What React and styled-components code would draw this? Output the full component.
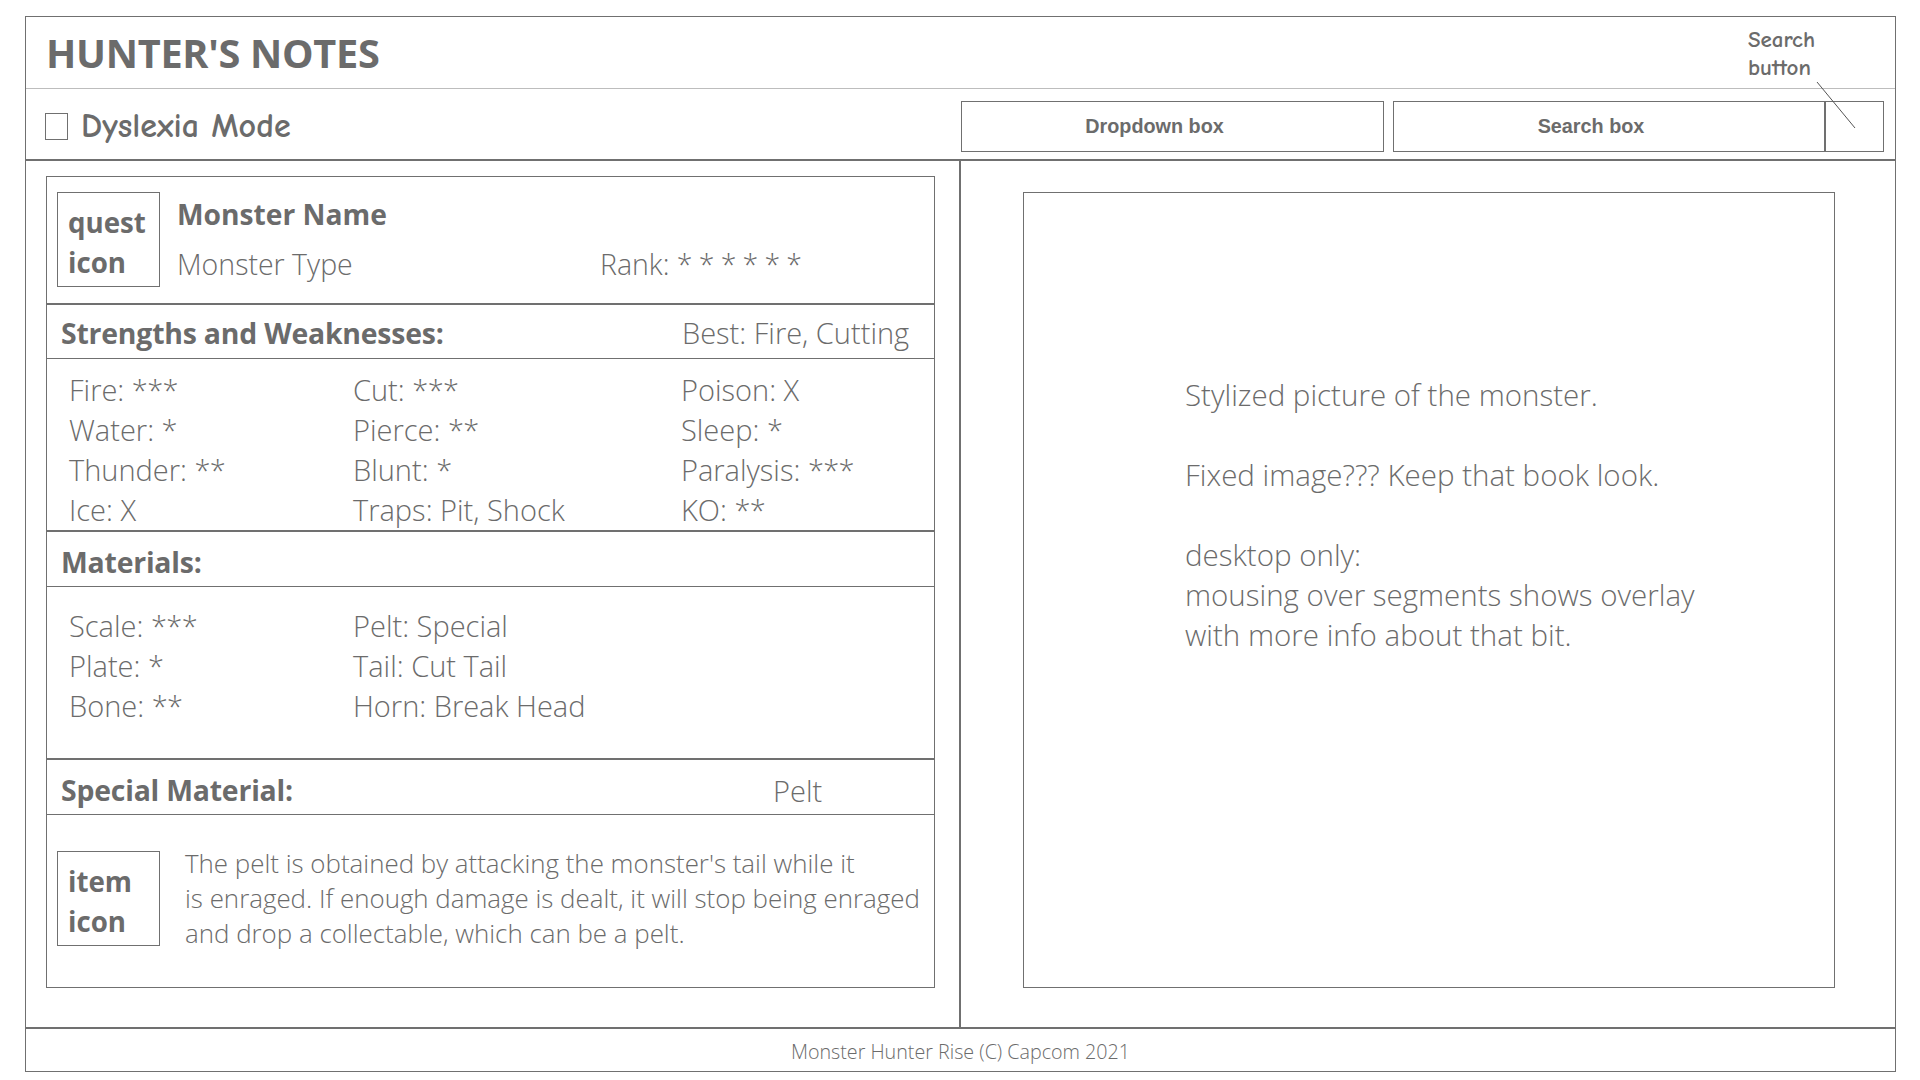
import React from "react";
import styled, { createGlobalStyle } from "styled-components";

const GlobalStyle = createGlobalStyle`
  html, body { margin: 0; padding: 0; background: #ffffff; }
  body { font-family: "Open Sans", "Noto Sans", sans-serif; color: #6b6b6b; }
  * { box-sizing: border-box; }
`;

const LINE = "#707070";
const TEXT = "#6b6b6b";

const Page = styled.div`
  width: 1920px;
  height: 1080px;
  padding: 16px 0 0 25px;
`;

const Frame = styled.div`
  position: relative;
  width: 1871px;
  height: 1056px;
  border: 1px solid ${LINE};
  display: flex;
  flex-direction: column;
`;

const Header = styled.header`
  height: 72px;
  border-bottom: 1px solid #bdbdbd;
  display: flex;
  align-items: center;
  padding-left: 20px;
`;

const Title = styled.h1`
  margin: 0;
  font-family: "Open Sans", "Noto Sans", sans-serif;
  font-weight: 700;
  font-size: 39.7px;
  letter-spacing: -0.3px;
  color: ${TEXT};
`;

const Toolbar = styled.div`
  height: 72px;
  border-bottom: 2px solid ${LINE};
  display: grid;
  grid-template-columns: 935px 1fr;
  align-items: center;
`;

const ToggleLabel = styled.label`
  display: flex;
  align-items: center;
  gap: 13px;
  padding-left: 19px;
  padding-top: 4px;
`;

const CheckBox = styled.span`
  width: 23px;
  height: 27px;
  border: 1px solid ${LINE};
  background: #fff;
`;

const ComicText = styled.span`
  font-family: "Comic Sans MS", "Comic Neue", "DejaVu Sans", sans-serif;
  font-size: 34px;
  font-weight: 700;
  color: ${TEXT};
`;

const Controls = styled.div`
  display: flex;
  align-items: center;
  padding: 4px 12px 0 0;
`;

const FieldBox = styled.div`
  height: 51px;
  width: ${(p) => p.$w}px;
  border: 1px solid ${LINE};
  display: flex;
  align-items: center;
  justify-content: center;
  padding-right: 36px;
  font-family: "Liberation Sans", Arial, sans-serif;
  font-weight: 700;
  font-size: 19.8px;
  color: ${TEXT};
`;

const SearchGroup = styled.div`
  display: flex;
  margin-left: 9px;
`;

const SearchButton = styled.button`
  height: 51px;
  width: 59px;
  border: 1px solid ${LINE};
  background: #fff;
  padding: 0;
`;

const Annotation = styled.div`
  position: absolute;
  left: 1722px;
  top: 9px;
  font-family: "Comic Sans MS", "Comic Neue", "DejaVu Sans", sans-serif;
  font-size: 23px;
  font-weight: 700;
  line-height: 28px;
  color: ${TEXT};
`;

const Pointer = styled.svg`
  position: absolute;
  left: 1790px;
  top: 64px;
`;

const Main = styled.main`
  height: 868px;
  border-bottom: 2px solid ${LINE};
  display: grid;
  grid-template-columns: 935px 1fr;
`;

const LeftColumn = styled.section`
  border-right: 2px solid ${LINE};
  padding: 15px 0 0 20px;
`;

const Card = styled.div`
  width: 889px;
  border: 1px solid ${LINE};
`;

const Section = styled.div`
  height: ${(p) => p.$h}px;
  border-bottom: ${(p) => (p.$last ? "none" : `${p.$thick ? 2 : 1}px solid ${LINE}`)};
`;

const MonsterHead = styled(Section)`
  display: flex;
  align-items: flex-start;
  padding: 15px 0 0 10px;
`;

const IconBox = styled.div`
  width: 103px;
  height: 95px;
  flex: none;
  border: 1px solid ${LINE};
  display: flex;
  flex-direction: column;
  justify-content: center;
  padding: 4px 0 0 10px;
  font-weight: 700;
  font-size: 27.7px;
  line-height: 40px;
  color: ${TEXT};
`;

const MonsterInfo = styled.div`
  padding: 0 0 0 17px;
  display: flex;
  flex-direction: column;
`;

const MonsterName = styled.div`
  font-weight: 700;
  font-size: 28.2px;
  line-height: 44px;
`;

const TypeRow = styled.div`
  display: flex;
  font-weight: 300;
  font-size: 28.5px;
  line-height: 40px;
  margin-top: 8px;
`;

const TypeCell = styled.span`
  width: 423px;
`;

const Stars = styled.span`
  letter-spacing: -0.6px;
`;

const SectionHeader = styled(Section)`
  display: grid;
  grid-template-columns: ${(p) => p.$valueAt}px 1fr;
  align-items: center;
  padding: ${(p) => p.$offset || 0}px 0 0 14px;
`;

const HeadLabel = styled.span`
  font-weight: 700;
  font-size: 28.4px;
  letter-spacing: -0.2px;
`;

const HeadValue = styled.span`
  font-weight: 300;
  font-size: 29px;
`;

const StatGrid = styled(Section)`
  display: grid;
  grid-template-columns: 284px 328px 1fr;
  grid-auto-rows: 40px;
  align-items: center;
  padding: ${(p) => p.$top}px 0 0 22px;
  font-weight: 300;
  font-size: 29px;
`;

const Stat = styled.span`
  white-space: nowrap;
`;

const SpecialBody = styled(Section)`
  display: flex;
  align-items: center;
  padding: 0 0 5px 10px;
  gap: 25px;
`;

const Description = styled.p`
  margin: 0;
  font-weight: 300;
  font-size: 25.9px;
  line-height: 35px;
  white-space: nowrap;
`;

const RightColumn = styled.section`
  padding: 31px 60px 0 62px;
`;

const PictureBox = styled.div`
  height: 796px;
  border: 1px solid ${LINE};
  padding: 182px 0 0 161px;
`;

const Note = styled.p`
  margin: 0 0 ${(p) => (p.$last ? 0 : 40)}px 0;
  font-weight: 300;
  font-size: 29.5px;
  line-height: 40px;
  white-space: nowrap;
`;

const Footer = styled.footer`
  flex: 1;
  display: flex;
  align-items: center;
  justify-content: center;
  font-weight: 300;
  font-size: 19.7px;
  padding-top: 3px;
`;

const strengths = [
  ["Fire: ***", "Cut: ***", "Poison: X"],
  ["Water: *", "Pierce: **", "Sleep: *"],
  ["Thunder: **", "Blunt: *", "Paralysis: ***"],
  ["Ice: X", "Traps: Pit, Shock", "KO: **"],
];

const materials = [
  ["Scale: ***", "Pelt: Special", ""],
  ["Plate: *", "Tail: Cut Tail", ""],
  ["Bone: **", "Horn: Break Head", ""],
];

function StatText({ text }) {
  const m = text.match(/^(.*?)(\*+)$/);
  if (!m) return <Stat>{text}</Stat>;
  return (
    <Stat>
      {m[1]}
      <Stars>{m[2]}</Stars>
    </Stat>
  );
}

export default function App() {
  return (
    <>
      <GlobalStyle />
      <Page>
        <Frame>
          <Header>
            <Title>HUNTER'S NOTES</Title>
          </Header>
          <Toolbar>
            <ToggleLabel>
              <CheckBox />
              <ComicText>Dyslexia Mode</ComicText>
            </ToggleLabel>
            <Controls>
              <FieldBox $w={423}>Dropdown box</FieldBox>
              <SearchGroup>
                <FieldBox $w={432}>Search box</FieldBox>
                <SearchButton aria-label="Search" />
              </SearchGroup>
            </Controls>
          </Toolbar>
          <Annotation>
            Search
            <br />
            button
          </Annotation>
          <Pointer width="42" height="50" viewBox="0 0 42 50">
            <line x1="1" y1="1" x2="39" y2="47" stroke="#555" strokeWidth="1" />
          </Pointer>
          <Main>
            <LeftColumn>
              <Card>
                <MonsterHead $h={128} $thick>
                  <IconBox>
                    <span>quest</span>
                    <span>icon</span>
                  </IconBox>
                  <MonsterInfo>
                    <MonsterName>Monster Name</MonsterName>
                    <TypeRow>
                      <TypeCell>Monster Type</TypeCell>
                      <span>
                        Rank: <Stars>* * * * * *</Stars>
                      </span>
                    </TypeRow>
                  </MonsterInfo>
                </MonsterHead>
                <SectionHeader $h={54} $valueAt={621} $offset={2}>
                  <HeadLabel>Strengths and Weaknesses:</HeadLabel>
                  <HeadValue>Best: Fire, Cutting</HeadValue>
                </SectionHeader>
                <StatGrid $h={173} $thick $top={10}>
                  {strengths.flat().map((s, i) => (
                    <StatText key={i} text={s} />
                  ))}
                </StatGrid>
                <SectionHeader $h={55} $valueAt={621} $offset={6}>
                  <HeadLabel>Materials:</HeadLabel>
                  <span />
                </SectionHeader>
                <StatGrid $h={173} $thick $top={18}>
                  {materials.flat().map((s, i) => (
                    <StatText key={i} text={s} />
                  ))}
                </StatGrid>
                <SectionHeader $h={55} $valueAt={712} $offset={6}>
                  <HeadLabel>Special Material:</HeadLabel>
                  <HeadValue>Pelt</HeadValue>
                </SectionHeader>
                <SpecialBody $h={172} $last>
                  <IconBox>
                    <span>item</span>
                    <span>icon</span>
                  </IconBox>
                  <Description>
                    The pelt is obtained by attacking the monster's tail while it
                    <br />
                    is enraged. If enough damage is dealt, it will stop being enraged
                    <br />
                    and drop a collectable, which can be a pelt.
                  </Description>
                </SpecialBody>
              </Card>
            </LeftColumn>
            <RightColumn>
              <PictureBox>
                <Note>Stylized picture of the monster.</Note>
                <Note>Fixed image??? Keep that book look.</Note>
                <Note $last>
                  desktop only:
                  <br />
                  mousing over segments shows overlay
                  <br />
                  with more info about that bit.
                </Note>
              </PictureBox>
            </RightColumn>
          </Main>
          <Footer>Monster Hunter Rise (C) Capcom 2021</Footer>
        </Frame>
      </Page>
    </>
  );
}
